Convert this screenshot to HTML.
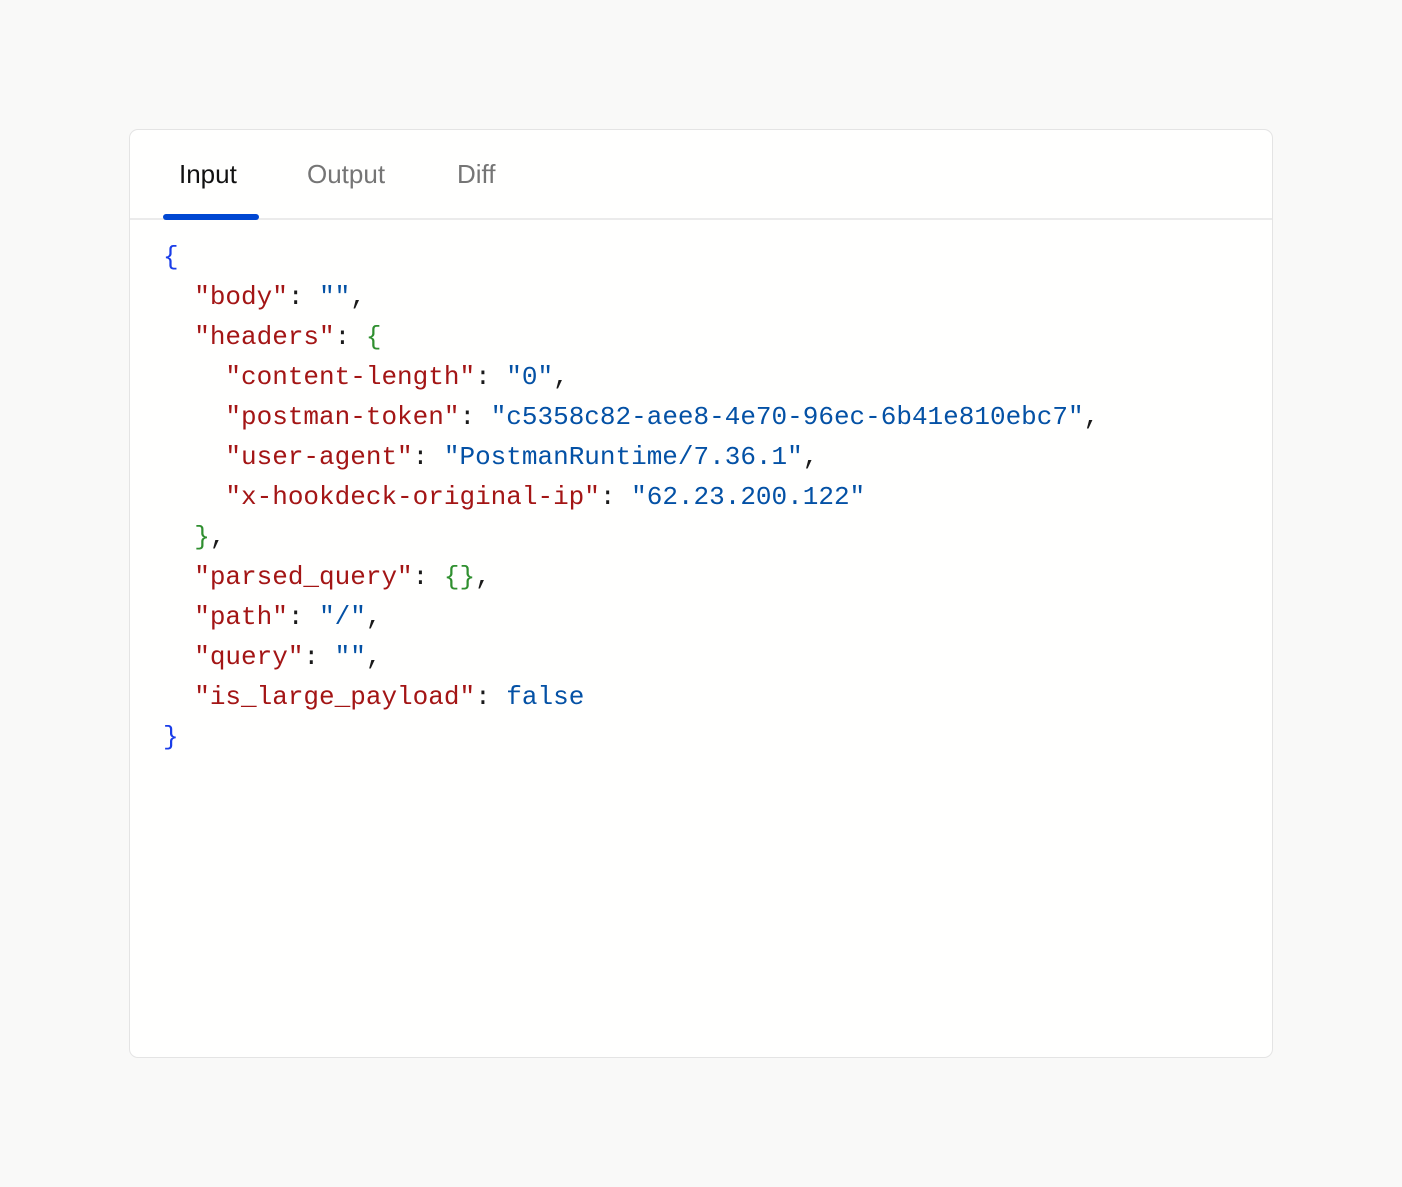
<!DOCTYPE html>
<html><head><style>
body{margin:0;background:#f9f9f8;width:1402px;height:1187px;position:relative;font-family:"Liberation Sans",sans-serif}
.card{position:absolute;left:129px;top:129px;width:1144px;height:929px;background:#fffffe;border:1px solid #e4e4e4;border-radius:9px;box-sizing:border-box}
.tabs{position:absolute;left:0;top:0;right:0;height:88px;border-bottom:2px solid #ebebeb}
.tab{position:absolute;top:29px;font-size:26px;color:#757575}
.ul{position:absolute;left:33px;top:84px;width:96px;height:6px;border-radius:3px;background:#0047d2}
pre{position:absolute;left:33px;top:107px;margin:0;font-family:"Liberation Mono",monospace;font-size:26px;line-height:40px;color:#1a1a1a}
.k{color:#a31515}.s{color:#0451a5}.b{color:#1a3de8}.g{color:#2f8f2f}
</style></head><body>
<div class="card">
<div class="tabs">
<div class="tab" style="left:49px;color:#111">Input</div>
<div class="tab" style="left:177px">Output</div>
<div class="tab" style="left:327px">Diff</div>
<div class="ul"></div>
</div>
<pre><span class="b">{</span>
  <span class="k">"body"</span>: <span class="s">""</span>,
  <span class="k">"headers"</span>: <span class="g">{</span>
    <span class="k">"content-length"</span>: <span class="s">"0"</span>,
    <span class="k">"postman-token"</span>: <span class="s">"c5358c82-aee8-4e70-96ec-6b41e810ebc7"</span>,
    <span class="k">"user-agent"</span>: <span class="s">"PostmanRuntime/7.36.1"</span>,
    <span class="k">"x-hookdeck-original-ip"</span>: <span class="s">"62.23.200.122"</span>
  <span class="g">}</span>,
  <span class="k">"parsed_query"</span>: <span class="g">{}</span>,
  <span class="k">"path"</span>: <span class="s">"/"</span>,
  <span class="k">"query"</span>: <span class="s">""</span>,
  <span class="k">"is_large_payload"</span>: <span class="s">false</span>
<span class="b">}</span></pre>
</div>
</body></html>
